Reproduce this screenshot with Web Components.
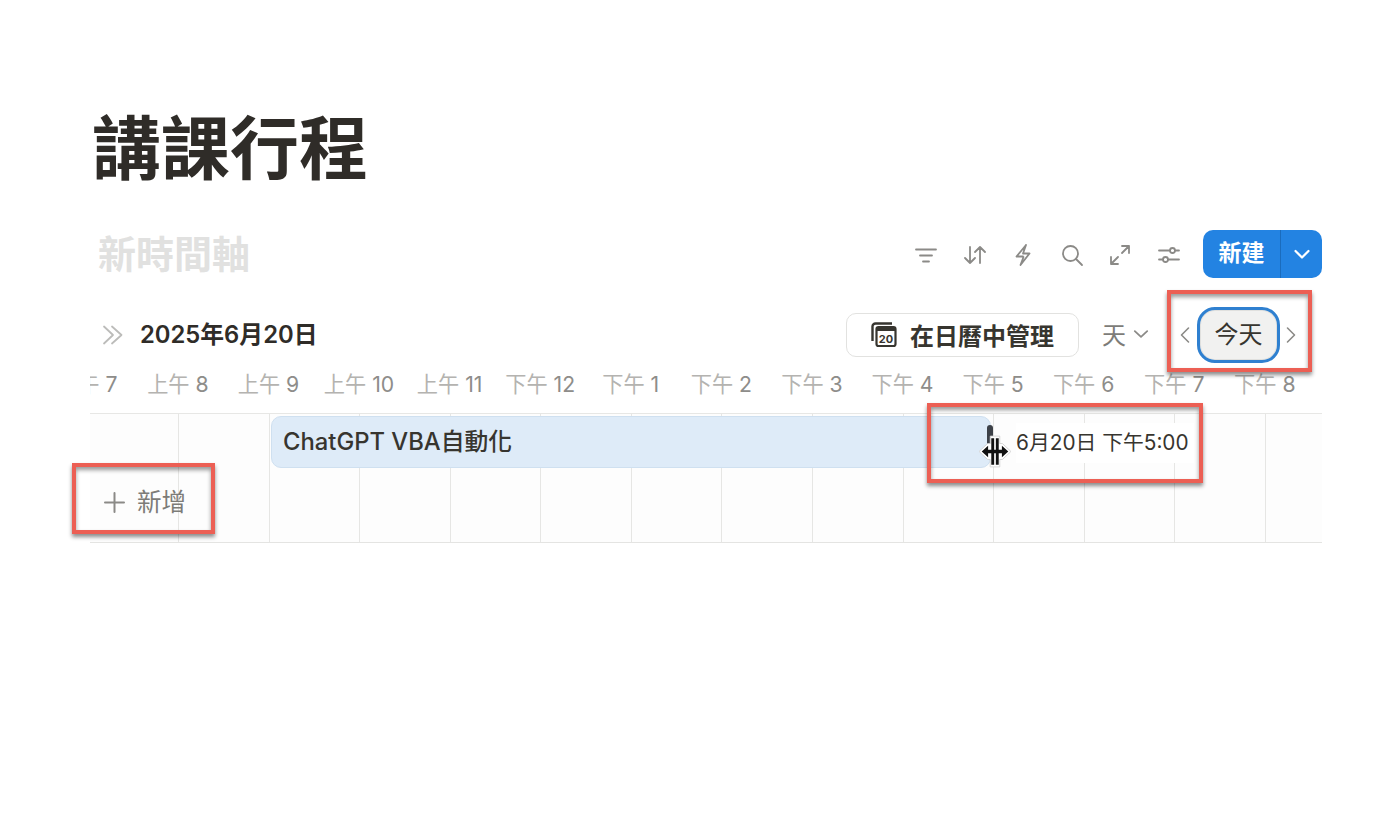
<!DOCTYPE html>
<html lang="zh-Hant">
<head>
<meta charset="utf-8">
<title>講課行程</title>
<style>
  html, body { margin: 0; background: #fff; }
  body { font-family: Inter, "Noto Sans CJK TC", sans-serif; color: #37352f; }
</style>
</head>
<body>
<notion-page>
  <span slot="title">講課行程</span>
  <db-toolbar></db-toolbar>
  <timeline-nav></timeline-nav>
  <timeline-hours></timeline-hours>
  <timeline-grid></timeline-grid>
</notion-page>

<script>
const FONT = 'Inter, "Noto Sans CJK TC", sans-serif';

class NotionPage extends HTMLElement {
  constructor() {
    super();
    this.attachShadow({ mode: 'open' }).innerHTML = `
      <style>
        :host { display: block; height: 832px; box-sizing: border-box; padding: 105px 78px 0 90px; overflow: hidden; font-family: ${FONT}; }
        h1 { margin: 0 0 0 2px; font-size: 69px; line-height: 88px; font-weight: 700; color: #2f2c28; height: 111px; }
      </style>
      <h1><slot name="title"></slot></h1>
      <slot></slot>`;
  }
}

class DbToolbar extends HTMLElement {
  constructor() {
    super();
    const stroke = 'fill="none" stroke="#8b8a87" stroke-width="1.800" stroke-linecap="round" stroke-linejoin="round"';
    this.attachShadow({ mode: 'open' }).innerHTML = `
      <style>
        :host { display: flex; align-items: center; height: 48px; margin-top: 14px; }
        .name { margin-left: 8px; font-size: 38px; line-height: 52px; font-weight: 700; color: #e1e1e0; flex: 1; }
        .icons { display: flex; gap: 24.600px; margin: 2px 22px 0 0; }
        svg { display: block; width: 24px; height: 24px; }
        .btn { display: flex; width: 119px; height: 48px; border-radius: 10px; background: #2383e2; color: #fff; overflow: hidden; }
        .btn b { width: 77px; font-size: 23px; line-height: 47px; text-align: center; font-weight: 700; border-right: 1px solid #1a6cbd; }
        .btn span { flex: 1; display: flex; align-items: center; justify-content: center; }
        .btn svg { width: 20px; height: 20px; }
      </style>
      <div class="name">新時間軸</div>
      <div class="icons">
        <svg viewBox="0 0 24 24" ${stroke}><path d="M2 6.500h20M6 12.500h12M9 18.500h6"/></svg>
        <svg viewBox="0 0 24 24" ${stroke}><path d="M7 4v16M2 15l5 5 5-5M17 20V4M12 9l5-5 5 5"/></svg>
        <svg viewBox="0 0 24 24" ${stroke}><path d="M15 2 5.500 13.500h6.500M9.500 22l9-11.500H12L15 2M9.500 22l3-8"/></svg>
        <svg viewBox="0 0 24 24" ${stroke}><circle cx="10.500" cy="10.500" r="7.500"/><path d="m16 16 6 6"/></svg>
        <svg viewBox="0 0 24 24" ${stroke}><path d="M14 10l7-7M14 3h7v7M10 14l-7 7M3 14v7h7"/></svg>
        <svg viewBox="0 0 24 24" ${stroke}><path d="M2 7.500h11M18 7.500h4M2 16.500h4M11 16.500h11"/><circle cx="15.500" cy="7.500" r="2.500"/><circle cx="8.500" cy="16.500" r="2.500"/></svg>
      </div>
      <div class="btn">
        <b>新建</b>
        <span><svg viewBox="0 0 20 20" fill="none" stroke="#fff" stroke-width="2.200" stroke-linecap="round" stroke-linejoin="round"><path d="m3.500 7 6.500 6.500L16.500 7"/></svg></span>
      </div>`;
  }
}

class TimelineNav extends HTMLElement {
  constructor() {
    super();
    this.attachShadow({ mode: 'open' }).innerHTML = `
      <style>
        :host { display: flex; align-items: center; height: 44px; margin-top: 35px; padding-right: 24px; position: relative; }
        .fold { width: 24px; height: 24px; margin-left: 11px; display: block; }
        .date { margin-left: 15px; font-size: 23.800px; font-weight: 600; color: #2f2c28; flex: 1; line-height: 44px; }
        .cal { display: flex; align-items: center; box-sizing: border-box; width: 233px; height: 44px; border: 1.500px solid #e2e2e0; border-radius: 10px; padding: 0 0 2px 23px; font-size: 24px; font-weight: 600; color: #37352f; }
        .cal svg { width: 28px; height: 28px; margin-right: 12px; }
        .unit { display: flex; align-items: center; margin-left: 23px; padding-bottom: 3px; font-size: 24px; color: #7d7c78; }
        .unit svg { width: 18px; height: 18px; margin-left: 6px; }
        .arrow { width: 14px; height: 20px; display: block; }
        .prev { margin-left: 28px; }
        .today { box-sizing: border-box; width: 83px; height: 56px; margin: 0 4px 0 5px; border: 3px solid #2f80d0; border-radius: 18px; background: #f1f1f0; box-shadow: inset 0 0 0 1px #e0e0de; text-align: center; font-size: 24px; line-height: 50px; color: #37352f; }
      </style>
      <svg class="fold" viewBox="0 0 24 24" fill="none" stroke="#bcbcba" stroke-width="1.800" stroke-linecap="round" stroke-linejoin="round"><path d="m3 3.500 9 8.500-9 8.500M11 3.500l9.500 8.500-9.500 8.500"/></svg>
      <div class="date">2025年6月20日</div>
      <div class="cal">
        <svg viewBox="0 0 28 28">
          <path d="M2.500 21V6.500a3 3 0 0 1 3-3H22" fill="none" stroke="#37352f" stroke-width="2.400"/>
          <rect x="6.500" y="7" width="19" height="19" rx="2" fill="#fff" stroke="#37352f" stroke-width="2.200"/>
          <rect x="6.500" y="7" width="19" height="4" fill="#37352f"/>
          <text x="16" y="23" text-anchor="middle" font-size="11" font-weight="700" font-family="Inter" fill="#37352f">20</text>
        </svg>
        在日曆中管理
      </div>
      <div class="unit">天<svg viewBox="0 0 16 16" fill="none" stroke="#8b8a87" stroke-width="1.600" stroke-linecap="round" stroke-linejoin="round"><path d="m2.500 5.500 5.500 5 5.500-5"/></svg></div>
      <svg class="arrow prev" viewBox="0 0 14 20" fill="none" stroke="#8b8a87" stroke-width="1.600" stroke-linecap="round" stroke-linejoin="round"><path d="M10.500 3 3.500 10l7 7"/></svg>
      <div class="today">今天</div>
      <svg class="arrow" viewBox="0 0 14 20" fill="none" stroke="#8b8a87" stroke-width="1.600" stroke-linecap="round" stroke-linejoin="round"><path d="m3.500 3 7 7-7 7"/></svg>
      <call-out style="left:1077px;top:-23px;width:145px;height:82px"></call-out>`;
  }
}

class TimelineHours extends HTMLElement {
  constructor() {
    super();
    const hours = ['上午 7', '上午 8', '上午 9', '上午 10', '上午 11', '下午 12', '下午 1', '下午 2', '下午 3', '下午 4', '下午 5', '下午 6', '下午 7', '下午 8'];
    this.attachShadow({ mode: 'open' }).innerHTML = `
      <style>
        :host { display: flex; height: 30px; margin-top: 12px; overflow: hidden; font-size: 21.200px; line-height: 30px; color: #8e8d8a; }
        span { flex: 0 0 90.580px; text-align: center; white-space: nowrap; }
        span:first-of-type { margin-left: -48px; }
        i { font-style: normal; color: #b4b3b0; }
      </style>
      ${hours.map(h => {
        const [a, b] = h.split(' ');
        return `<span><i>${a}</i> ${b}</span>`;
      }).join('')}`;
  }
}

class TimelineGrid extends HTMLElement {
  constructor() {
    super();
    this.attachShadow({ mode: 'open' }).innerHTML = `
      <style>
        :host { display: block; position: relative; height: 130px; margin-top: 14px; box-sizing: border-box; border-top: 1.500px solid #e7e7e5; border-bottom: 1.500px solid #e4e4e2; background: #fdfdfd; }
        .cols { display: flex; height: 100%; overflow: hidden; }
        .cols div { flex: 0 0 90.580px; box-sizing: border-box; border-left: 1px solid #e6e6e4; }
        .cols div:first-child { flex-basis: 88px; border-left: 0; }
        .bar { position: absolute; left: 181px; top: 2px; box-sizing: border-box; width: 720px; height: 52px; border: 1px solid #cfe0f0; border-radius: 10px; background: #deebf8; padding-left: 11px; font-size: 23.800px; line-height: 50px; font-weight: 500; color: #37352f; white-space: nowrap; }
        .end { position: absolute; left: 926px; top: 9px; height: 40px; width: 178px; background: #fff; font-size: 20.800px; line-height: 40px; color: #37352f; white-space: nowrap; }
        .add { position: absolute; left: 13px; top: 70px; display: flex; align-items: center; font-size: 24.500px; line-height: 36px; color: #7d7c78; }
        .add svg { width: 23px; height: 23px; margin-right: 11px; }
        .handle { position: absolute; left: 897px; top: 11px; width: 6px; height: 22px; border-radius: 3px; background: #3d4148; }
        .cursor { position: absolute; left: 888px; top: 21px; width: 34px; height: 33px; }
      </style>
      <div class="cols">${'<div></div>'.repeat(14)}</div>
      <div class="bar">ChatGPT VBA自動化</div>
      <div class="end">6月20日 下午5:00</div>
      <div class="add">
        <svg viewBox="0 0 23 23" fill="none" stroke="#8b8a87" stroke-width="2" stroke-linecap="round"><path d="M11.500 2v19M2 11.500h19"/></svg>
        新增
      </div>
      <div class="handle"></div>
      <svg class="cursor" viewBox="0 0 32 31">
        <path d="M1 15.500 9 8h2.500V1h9v7H23l8 7.500L23 23h-2.500v7h-9v-7H9z" fill="#fff" stroke="#d0d0d0" stroke-width=".8"/>
        <path d="M12.500 3h2.700v25h-2.700zM16.800 3h2.700v25h-2.700z" fill="#111"/>
        <path d="M3.500 15.500 9.500 10v3.800h13V10l6 5.500-6 5.500v-3.800h-13V21z" fill="#111"/>
      </svg>
      <call-out style="left:-18px;top:49px;width:143px;height:71px"></call-out>
      <call-out style="left:837px;top:-11px;width:276px;height:80px"></call-out>`;
  }
}

class CallOut extends HTMLElement {
  constructor() {
    super();
    this.attachShadow({ mode: 'open' }).innerHTML = `
      <style>
        :host { display: block; position: absolute; box-sizing: border-box; border: 4px solid #ec5f54; box-shadow: 0 3px 4px rgba(0,0,0,.45), inset 0 3px 4px rgba(0,0,0,.4); pointer-events: none; }
      </style>`;
  }
}

customElements.define('call-out', CallOut);
customElements.define('notion-page', NotionPage);
customElements.define('db-toolbar', DbToolbar);
customElements.define('timeline-nav', TimelineNav);
customElements.define('timeline-hours', TimelineHours);
customElements.define('timeline-grid', TimelineGrid);
</script>
</body>
</html>
